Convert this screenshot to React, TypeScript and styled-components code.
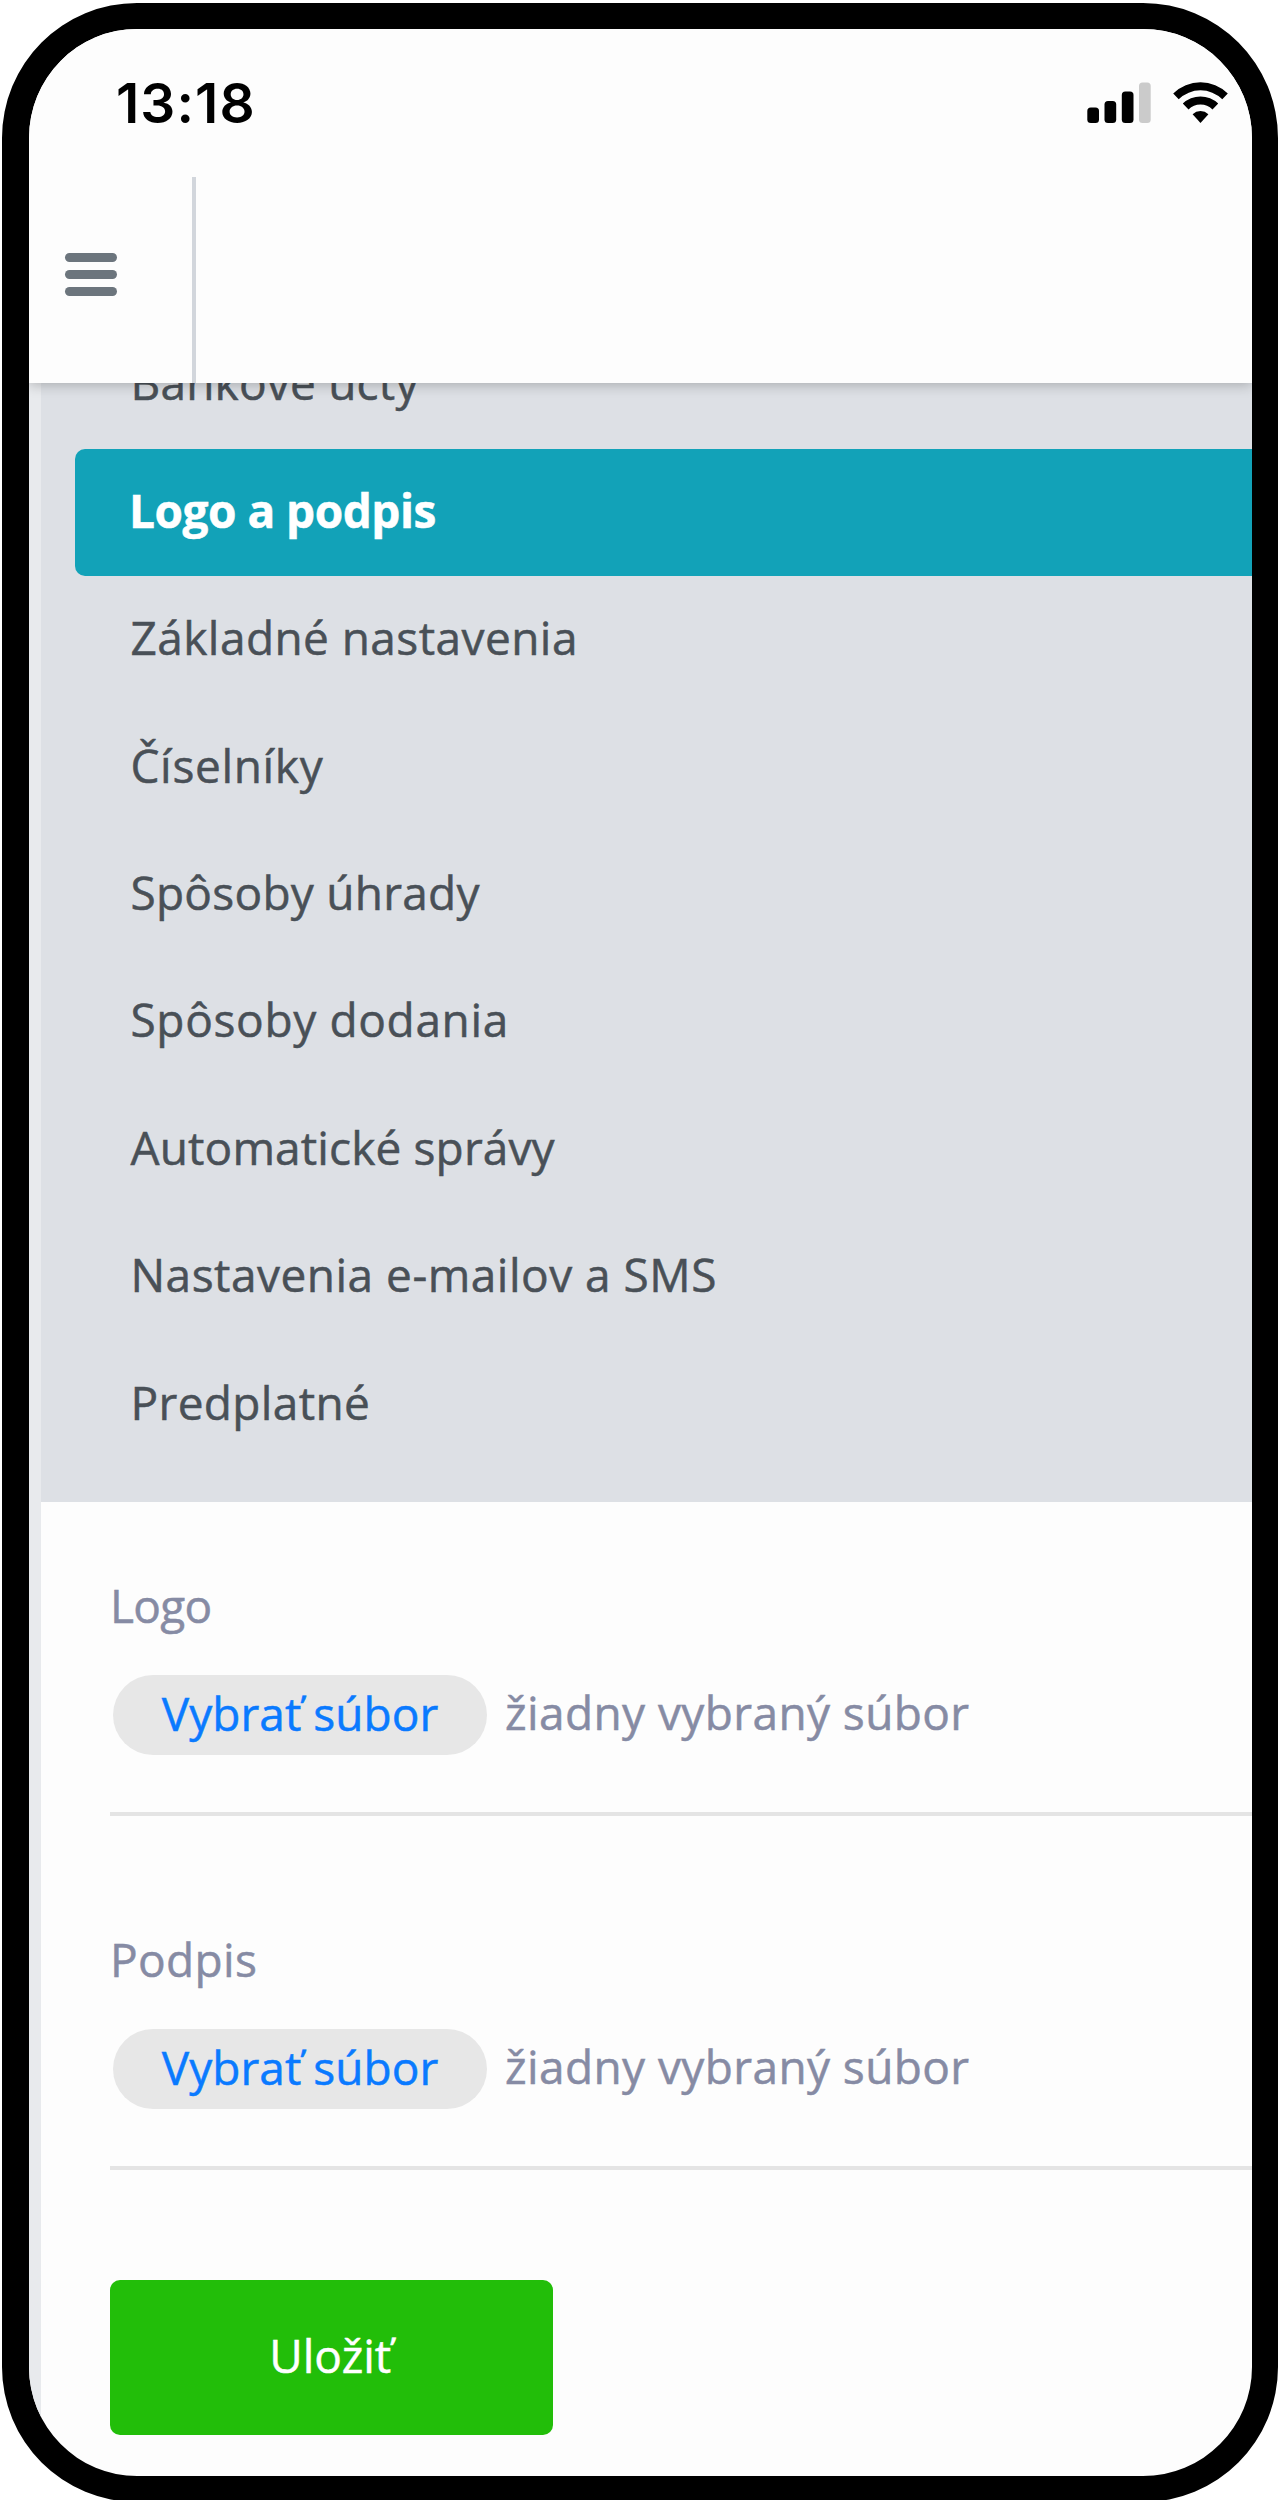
import React from "react";
import styled, { createGlobalStyle } from "styled-components";

const GlobalStyle = createGlobalStyle`
  *, *::before, *::after { box-sizing: border-box; }
  body {
    margin: 0;
    background: #fff;
    font-family: "Open Sans", "Noto Sans", sans-serif;
    font-size: 46px;
  }
`;

const Page = styled.main`
  height: 2500px;
  overflow: hidden;
  padding: 3px 2px 0;
`;

const Phone = styled.div`
  width: 1276px;
  height: 2499px;
  border: solid #000;
  border-width: 26px 26px 26px 27px;
  border-radius: 135px;
  background: #fdfdfd;
  overflow: hidden;
  display: flex;
  flex-direction: column;
`;

const Header = styled.header`
  position: relative;
  z-index: 1;
  flex: none;
  height: 354px;
  background: #fdfdfd;
  box-shadow: 0 2px 12px rgba(0, 0, 0, 0.24);
`;

const StatusBar = styled.div`
  height: 148px;
  display: flex;
  justify-content: space-between;
  padding: 51px 24px 0 87px;
`;

const Clock = styled.time`
  font-family: Inter, sans-serif;
  font-size: 55px;
  font-weight: 600;
  line-height: 46px;
  letter-spacing: 1.1px;
  color: #000;
`;

const Indicators = styled.div`
  display: flex;
  align-items: flex-start;
  gap: 22px;
  padding-top: 0.5px;
`;

const Toolbar = styled.div`
  height: 206px;
  display: flex;
`;

const MenuButton = styled.button`
  width: 167px;
  padding: 0 0 11px 35.5px;
  border: 0;
  border-right: 4px solid #d2d6dc;
  background: none;
  display: flex;
  flex-direction: column;
  justify-content: center;
  gap: 8.4px;
`;

const MenuBar = styled.span`
  width: 52px;
  height: 9px;
  border-radius: 5px;
  background: #6c757d;
`;

const Content = styled.div`
  flex: 1;
  display: flex;
  flex-direction: column;
  border-left: 12px solid #e8eaed;
  -webkit-text-stroke-width: 0.5px;
`;

const Menu = styled.nav`
  flex: none;
  height: 1119px;
  overflow: hidden;
  background: #dde0e5;
`;

const MenuList = styled.ul`
  list-style: none;
  margin: -61.3px 0 0 34px;
  padding: 0;
`;

const MenuItem = styled.li<{ $active?: boolean; $tracking: number }>`
  height: 127.4px;
  padding: 0 0 6px ${(p) => (p.$active ? 54 : 55.5)}px;
  display: flex;
  align-items: center;
  border-radius: 10px 0 0 10px;
  white-space: nowrap;
  letter-spacing: ${(p) => p.$tracking}px;
  font-weight: ${(p) => (p.$active ? 700 : 400)};
  color: ${(p) => (p.$active ? "#fff" : "#495057")};
  background: ${(p) => (p.$active ? "#12a2b8" : "transparent")};
`;

const Form = styled.form`
  padding: 73px 0 0 69px;
`;

const Field = styled.div`
  padding-bottom: 56.5px;
  border-bottom: 4px solid #e4e4e4;
  color: #868ba4;

  & + & {
    margin-top: 113.5px;
  }
`;

const Label = styled.div<{ $tracking: number }>`
  line-height: 60px;
  margin-bottom: 39.5px;
  letter-spacing: ${(p) => p.$tracking}px;
`;

const FileRow = styled.div`
  height: 80.7px;
  display: flex;
  align-items: stretch;
  gap: 18px;
  padding-left: 3px;
`;

const FileButton = styled.button`
  width: 374px;
  padding: 0 0 4px;
  border: 0;
  border-radius: 41px;
  background: #e7e7e7;
  color: #0a7aff;
  font: inherit;
  letter-spacing: 0.05px;
`;

const FileName = styled.span`
  display: flex;
  align-items: center;
  padding-bottom: 6.4px;
  letter-spacing: 0.4px;
`;

const SaveButton = styled.button`
  display: block;
  width: 442.5px;
  height: 155px;
  margin-top: 110px;
  padding: 0 2px 4.7px 0;
  border: 0;
  border-radius: 10px;
  background: #22be09;
  color: #fff;
  font: inherit;
  letter-spacing: -0.1px;
`;

const menu = [
  { text: "Bankové účty", tracking: 0.2 },
  { text: "Logo a podpis", tracking: -0.5, active: true },
  { text: "Základné nastavenia", tracking: 0.43 },
  { text: "Číselníky", tracking: 0.65 },
  { text: "Spôsoby úhrady", tracking: 0.25 },
  { text: "Spôsoby dodania", tracking: 0.65 },
  { text: "Automatické správy", tracking: 0.13 },
  { text: "Nastavenia e-mailov a SMS", tracking: 0.49 },
  { text: "Predplatné", tracking: 0.35 },
];

const fields = [
  { label: "Logo", tracking: -0.7 },
  { label: "Podpis", tracking: 0.36 },
];

const Signal = () => (
  <svg width="64" height="43" viewBox="0 0 64 43">
    <rect x="0.3" y="26.5" width="11.7" height="15.5" rx="3.5" />
    <rect x="17.5" y="20" width="11.7" height="22" rx="3.5" />
    <rect x="34.8" y="10.5" width="11.7" height="31.5" rx="3.5" />
    <rect x="52" y="1.5" width="11.7" height="40.5" rx="3.5" fill="#cbcbcb" />
  </svg>
);

const Wifi = () => (
  <svg width="55" height="43" viewBox="0 0 55 43">
    <path d="M0.2 12.5 A39 39 0 0 1 54.8 12.5 L49.3 18.2 A31.3 31.3 0 0 0 5.7 18.2 Z" />
    <path d="M9.8 22.6 A25.3 25.3 0 0 1 45.2 22.6 L39.5 28.5 A17.2 17.2 0 0 0 15.5 28.5 Z" />
    <path d="M19.6 33.2 A11.6 11.6 0 0 1 35.4 33.2 L27.5 42 Z" />
  </svg>
);

export default function App() {
  return (
    <Page>
      <GlobalStyle />
      <Phone>
        <Header>
          <StatusBar>
            <Clock>13:18</Clock>
            <Indicators>
              <Signal />
              <Wifi />
            </Indicators>
          </StatusBar>
          <Toolbar>
            <MenuButton type="button" aria-label="Menu">
              <MenuBar />
              <MenuBar />
              <MenuBar />
            </MenuButton>
          </Toolbar>
        </Header>
        <Content>
          <Menu>
            <MenuList>
              {menu.map((m) => (
                <MenuItem key={m.text} $active={m.active} $tracking={m.tracking}>
                  {m.text}
                </MenuItem>
              ))}
            </MenuList>
          </Menu>
          <Form>
            {fields.map((f) => (
              <Field key={f.label}>
                <Label $tracking={f.tracking}>{f.label}</Label>
                <FileRow>
                  <FileButton type="button">Vybrať súbor</FileButton>
                  <FileName>žiadny vybraný súbor</FileName>
                </FileRow>
              </Field>
            ))}
            <SaveButton type="button">Uložiť</SaveButton>
          </Form>
        </Content>
      </Phone>
    </Page>
  );
}
